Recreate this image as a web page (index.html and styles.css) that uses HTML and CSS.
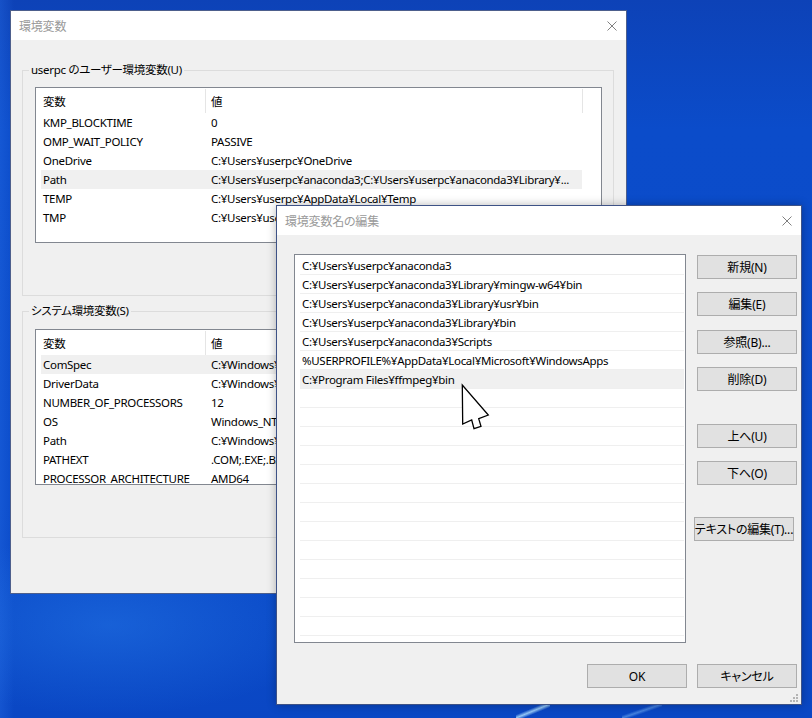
FILE: index.html
```html
<!DOCTYPE html>
<html lang="ja">
<head>
<meta charset="utf-8">
<title>環境変数</title>
<link rel="stylesheet" href="styles.css">
</head>
<body>
<section class="window env">
  <header class="titlebar">
    <span class="title">環境変数</span>
    <svg class="close" width="10" height="10" viewBox="0 0 10 10"><path d="M0.5 0.5L9.5 9.5M9.5 0.5L0.5 9.5" stroke="#808080" stroke-width="1" fill="none"/></svg>
  </header>
  <div class="env-body">
    <div class="group g-user">
      <span class="group-label">userpc のユーザー環境変数(U)</span>
      <div class="listview">
        <div class="lv-head"><span class="h1">変数</span><span class="h2">値</span><span class="h3"></span></div>
        <div class="lv-row"><span class="c1">KMP_BLOCKTIME</span><span class="c2">0</span></div>
        <div class="lv-row"><span class="c1">OMP_WAIT_POLICY</span><span class="c2">PASSIVE</span></div>
        <div class="lv-row"><span class="c1">OneDrive</span><span class="c2">C:¥Users¥userpc¥OneDrive</span></div>
        <div class="lv-row sel"><span class="c1">Path</span><span class="c2">C:¥Users¥userpc¥anaconda3;C:¥Users¥userpc¥anaconda3¥Library¥...</span></div>
        <div class="lv-row"><span class="c1">TEMP</span><span class="c2">C:¥Users¥userpc¥AppData¥Local¥Temp</span></div>
        <div class="lv-row"><span class="c1">TMP</span><span class="c2">C:¥Users¥userpc¥AppData¥Local¥Temp</span></div>
      </div>
    </div>
    <div class="group g-sys">
      <span class="group-label">システム環境変数(S)</span>
      <div class="listview">
        <div class="lv-head"><span class="h1">変数</span><span class="h2">値</span><span class="h3"></span></div>
        <div class="lv-row sel"><span class="c1">ComSpec</span><span class="c2">C:¥Windows¥system32¥cmd.exe</span></div>
        <div class="lv-row"><span class="c1">DriverData</span><span class="c2">C:¥Windows¥System32¥Drivers¥DriverData</span></div>
        <div class="lv-row"><span class="c1">NUMBER_OF_PROCESSORS</span><span class="c2">12</span></div>
        <div class="lv-row"><span class="c1">OS</span><span class="c2">Windows_NT</span></div>
        <div class="lv-row"><span class="c1">Path</span><span class="c2">C:¥Windows¥system32;C:¥Windows;C:¥Windows¥System32¥Wbem</span></div>
        <div class="lv-row"><span class="c1">PATHEXT</span><span class="c2">.COM;.EXE;.BAT;.CMD;.VBS;.VBE;.JS;.JSE</span></div>
        <div class="lv-row"><span class="c1">PROCESSOR_ARCHITECTURE</span><span class="c2">AMD64</span></div>
      </div>
    </div>
  </div>
</section>

<section class="window edit">
  <header class="titlebar">
    <span class="title">環境変数名の編集</span>
    <svg class="close" width="10" height="10" viewBox="0 0 10 10"><path d="M0.5 0.5L9.5 9.5M9.5 0.5L0.5 9.5" stroke="#808080" stroke-width="1" fill="none"/></svg>
  </header>
  <div class="edit-body">
    <div class="paths">
      <div class="p-row">C:¥Users¥userpc¥anaconda3</div>
      <div class="p-row">C:¥Users¥userpc¥anaconda3¥Library¥mingw-w64¥bin</div>
      <div class="p-row">C:¥Users¥userpc¥anaconda3¥Library¥usr¥bin</div>
      <div class="p-row">C:¥Users¥userpc¥anaconda3¥Library¥bin</div>
      <div class="p-row">C:¥Users¥userpc¥anaconda3¥Scripts</div>
      <div class="p-row">%USERPROFILE%¥AppData¥Local¥Microsoft¥WindowsApps</div>
      <div class="p-row sel">C:¥Program Files¥ffmpeg¥bin</div>
      <div class="p-row"></div>
      <div class="p-row"></div>
      <div class="p-row"></div>
      <div class="p-row"></div>
      <div class="p-row"></div>
      <div class="p-row"></div>
      <div class="p-row"></div>
      <div class="p-row"></div>
      <div class="p-row"></div>
      <div class="p-row"></div>
      <div class="p-row"></div>
      <div class="p-row"></div>
      <div class="p-row"></div>
      <div class="p-row"></div>
    </div>
    <div class="side">
      <button class="btn">新規(N)</button>
      <button class="btn">編集(E)</button>
      <button class="btn b-browse">参照(B)...</button>
      <button class="btn">削除(D)</button>
      <button class="btn b-up">上へ(U)</button>
      <button class="btn">下へ(O)</button>
      <button class="btn b-text">テキストの編集(T)...</button>
    </div>
    <div class="footer">
      <button class="btn">OK</button>
      <button class="btn">キャンセル</button>
    </div>
  </div>
  <svg class="grip" width="8" height="8" viewBox="0 0 8 8"><g fill="#b4b4b4"><rect x="6" y="0" width="2" height="2"/><rect x="3" y="3" width="2" height="2"/><rect x="6" y="3" width="2" height="2"/><rect x="0" y="6" width="2" height="2"/><rect x="3" y="6" width="2" height="2"/><rect x="6" y="6" width="2" height="2"/></g></svg>
</section>

<svg class="cursor" width="32" height="50" viewBox="0 0 32 50"><polygon points="2.3,2 2.7,41 11.7,37 14,45.7 21,43.3 18.7,35.7 28.3,32" fill="#fff" stroke="#000" stroke-width="1.3" stroke-linejoin="miter"/></svg>
</body>
</html>
```

FILE: styles.css
```css
* { box-sizing: border-box; }
html, body { margin: 0; padding: 0; }
body {
  width: 812px;
  height: 718px;
  overflow: hidden;
  position: relative;
  background:
    linear-gradient(to bottom right, rgba(160,215,255,0) 38%, rgba(170,220,255,0.85) 50%, rgba(160,215,255,0) 62%) 516px 704px / 34px 14px no-repeat,
    linear-gradient(to bottom right, rgba(160,215,255,0) 40%, rgba(140,200,255,0.45) 50%, rgba(160,215,255,0) 60%) 622px 704px / 40px 14px no-repeat,
    radial-gradient(ellipse 220px 90px at 110px 625px, rgba(40,125,235,0.45), rgba(40,125,235,0)),
    linear-gradient(90deg, rgba(40,110,230,0.35) 0, rgba(40,110,230,0) 14px),
    linear-gradient(180deg, #0d42b7 0%, #0b4cca 18%, #0a4bca 70%, #0a47c4 100%);
  font-family: "Noto Sans", "Noto Sans CJK JP", sans-serif;
  font-size: 11.5px;
  letter-spacing: -0.3px;
  font-feature-settings: "palt";
  color: #000;
}

.window {
  position: absolute;
  background: #f0f0f0;
  border: 1px solid #4d5f8c;
  display: flex;
  flex-direction: column;
}
.env { left: 10px; top: 10px; width: 617px; height: 584px; }
.edit { left: 276px; top: 205px; width: 526px; height: 500px; border-color: #3e5286; box-shadow: 0 0 9px rgba(0,0,0,0.28); }

.titlebar {
  flex: none;
  height: 29px;
  background: #fff;
  display: flex;
  align-items: center;
  justify-content: space-between;
  padding: 0 9px 0 8px;
}
.title {
  color: #9a9a9a;
  font-family: "Noto Sans CJK JP", sans-serif;
  font-size: 12px;
  letter-spacing: -0.2px;
}
.close { display: block; }

.env-body { padding: 30px 12px 0 11px; }
.group {
  position: relative;
  border: 1px solid #dcdcdc;
  padding: 16px 11px 52px 12px;
}
.g-sys { margin-top: 15px; padding-top: 17px; }
.group-label {
  position: absolute;
  top: -9px;
  left: 6px;
  padding: 0 2px;
  line-height: 16px;
  background: #f0f0f0;
  white-space: nowrap;
}

.listview {
  height: 156px;
  border: 1px solid #828790;
  background: #fff;
  overflow: hidden;
}
.lv-head { display: flex; height: 25px; }
.lv-head span {
  display: flex;
  align-items: center;
  margin-top: 1px;
  height: 24px;
}
.h1 { width: 170px; padding-left: 7px; border-right: 1px solid #e5e5e5; }
.h2 { width: 377px; padding-left: 5px; border-right: 1px solid #e5e5e5; }
.h3 { flex: 1; }
.lv-row {
  display: flex;
  align-items: center;
  height: 19px;
  width: 541px;
  margin-left: 5px;
  white-space: nowrap;
}
.lv-row.sel { background: #f0f0f0; }
.c1 { width: 164px; padding-left: 2px; flex: none; }
.c2 { flex: 1; padding-left: 6px; overflow: hidden; }

.edit-body {
  flex: 1;
  display: grid;
  grid-template-columns: 392px 100px;
  grid-template-rows: 389px auto;
  column-gap: 11px;
  row-gap: 21px;
  padding: 19px 4px 0 17px;
}
.paths {
  border: 1px solid #828790;
  background: #fff;
  overflow: hidden;
  padding-top: 1px;
}
.p-row {
  height: 19px;
  margin: 0 1px 0 5px;
  padding-left: 2px;
  border-bottom: 1px solid #efefef;
  display: flex;
  align-items: center;
  white-space: nowrap;
}
.p-row.sel { background: #f0f0f0; }

.side { display: flex; flex-direction: column; padding-top: 1px; gap: 13px; }
.btn {
  width: 100px;
  height: 24px;
  padding: 0;
  margin: 0;
  border: 1px solid #adadad;
  background: #e1e1e1;
  color: #000;
  font-family: "Noto Sans", "Noto Sans CJK JP", sans-serif;
  font-size: 12px;
  letter-spacing: -0.2px;
  font-feature-settings: "palt";
  display: flex;
  align-items: center;
  justify-content: center;
  white-space: nowrap;
}
.b-browse { margin-top: 1px; }
.b-up { margin-top: 20px; }
.b-text { margin-top: 19px; margin-left: -3px; }

.footer {
  grid-column: 1 / -1;
  display: flex;
  justify-content: flex-end;
  gap: 10px;
}

.grip { position: absolute; right: 3px; bottom: 2px; }
.cursor { position: absolute; left: 460px; top: 383px; }
```
